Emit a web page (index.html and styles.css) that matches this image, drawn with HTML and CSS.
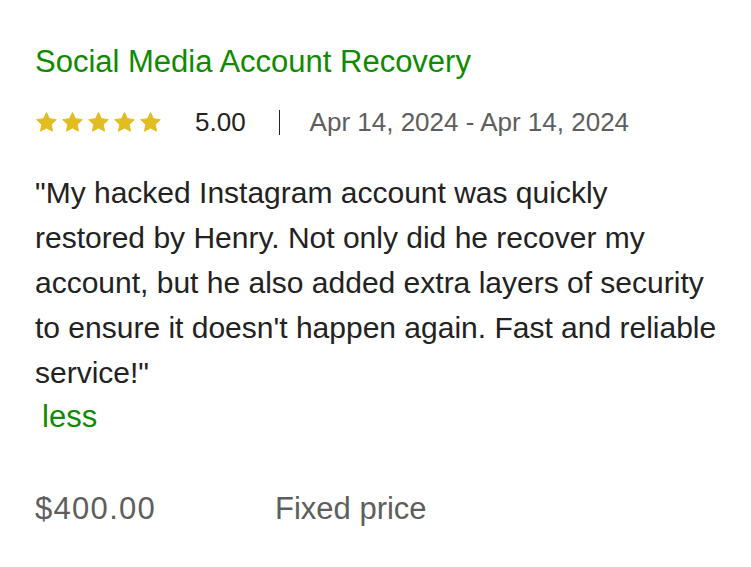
FILE: index.html
```html
<!DOCTYPE html>
<html>
<head>
<meta charset="utf-8">
<link rel="stylesheet" href="styles.css">
</head>
<body>
<div class="review">
  <h3 class="title">Social Media Account Recovery</h3>
  <div class="meta">
    <div class="stars">
      <svg class="star" viewBox="0 0 24 24"><path d="M12 1.5l3.1 6.5 7.1 1-5.2 5 1.3 7.1L12 17.7l-6.3 3.4 1.3-7.1-5.2-5 7.1-1z" stroke-linejoin="round"/></svg>
      <svg class="star" viewBox="0 0 24 24"><path d="M12 1.5l3.1 6.5 7.1 1-5.2 5 1.3 7.1L12 17.7l-6.3 3.4 1.3-7.1-5.2-5 7.1-1z" stroke-linejoin="round"/></svg>
      <svg class="star" viewBox="0 0 24 24"><path d="M12 1.5l3.1 6.5 7.1 1-5.2 5 1.3 7.1L12 17.7l-6.3 3.4 1.3-7.1-5.2-5 7.1-1z" stroke-linejoin="round"/></svg>
      <svg class="star" viewBox="0 0 24 24"><path d="M12 1.5l3.1 6.5 7.1 1-5.2 5 1.3 7.1L12 17.7l-6.3 3.4 1.3-7.1-5.2-5 7.1-1z" stroke-linejoin="round"/></svg>
      <svg class="star" viewBox="0 0 24 24"><path d="M12 1.5l3.1 6.5 7.1 1-5.2 5 1.3 7.1L12 17.7l-6.3 3.4 1.3-7.1-5.2-5 7.1-1z" stroke-linejoin="round"/></svg>
    </div>
    <span class="score">5.00</span>
    <span class="divider"></span>
    <span class="dates">Apr 14, 2024 - Apr 14, 2024</span>
  </div>
  <p class="text">"My hacked Instagram account was quickly restored by Henry. Not only did he recover my account, but he also added extra layers of security to ensure it doesn't happen again. Fast and reliable service!"</p>
  <a class="less">less</a>
  <div class="price">
    <span class="amount">$400.00</span>
    <span class="type">Fixed price</span>
  </div>
</div>
</body>
</html>
```
FILE: styles.css
```css
html, body {
  margin: 0;
  padding: 0;
  background: #fff;
}
body {
  font-family: "Liberation Sans", Arial, sans-serif;
  color: #222;
}
.review {
  padding: 42px 0 0 35px;
  width: 682px;
}
.title {
  margin: 0;
  font-size: 31px;
  font-weight: 400;
  line-height: 40px;
  color: #108a00;
  white-space: nowrap;
}
.meta {
  display: flex;
  align-items: center;
  margin-top: 23px;
  height: 34px;
  line-height: 34px;
  font-size: 26px;
  white-space: nowrap;
}
.stars {
  display: flex;
  gap: 3px;
}
.star {
  width: 23px;
  height: 23px;
  fill: #e2bd22;
  stroke: #e2bd22;
  stroke-width: 1;
}
.score {
  margin-left: 33px;
  color: #222;
}
.divider {
  width: 1px;
  height: 25px;
  background: #222;
  margin: 0 30px 0 33px;
}
.dates {
  color: #5e5e5e;
}
.text {
  margin: 31px 0 0 0;
  font-size: 30px;
  line-height: 45px;
  color: #222;
}
.less {
  display: block;
  margin-left: 7px;
  font-size: 31px;
  line-height: 43px;
  color: #108a00;
}
.price {
  display: flex;
  margin-top: 48px;
  font-size: 31px;
  line-height: 45px;
  color: #5e5e5e;
}
.amount {
  width: 240px;
  letter-spacing: 1.3px;
}
```
